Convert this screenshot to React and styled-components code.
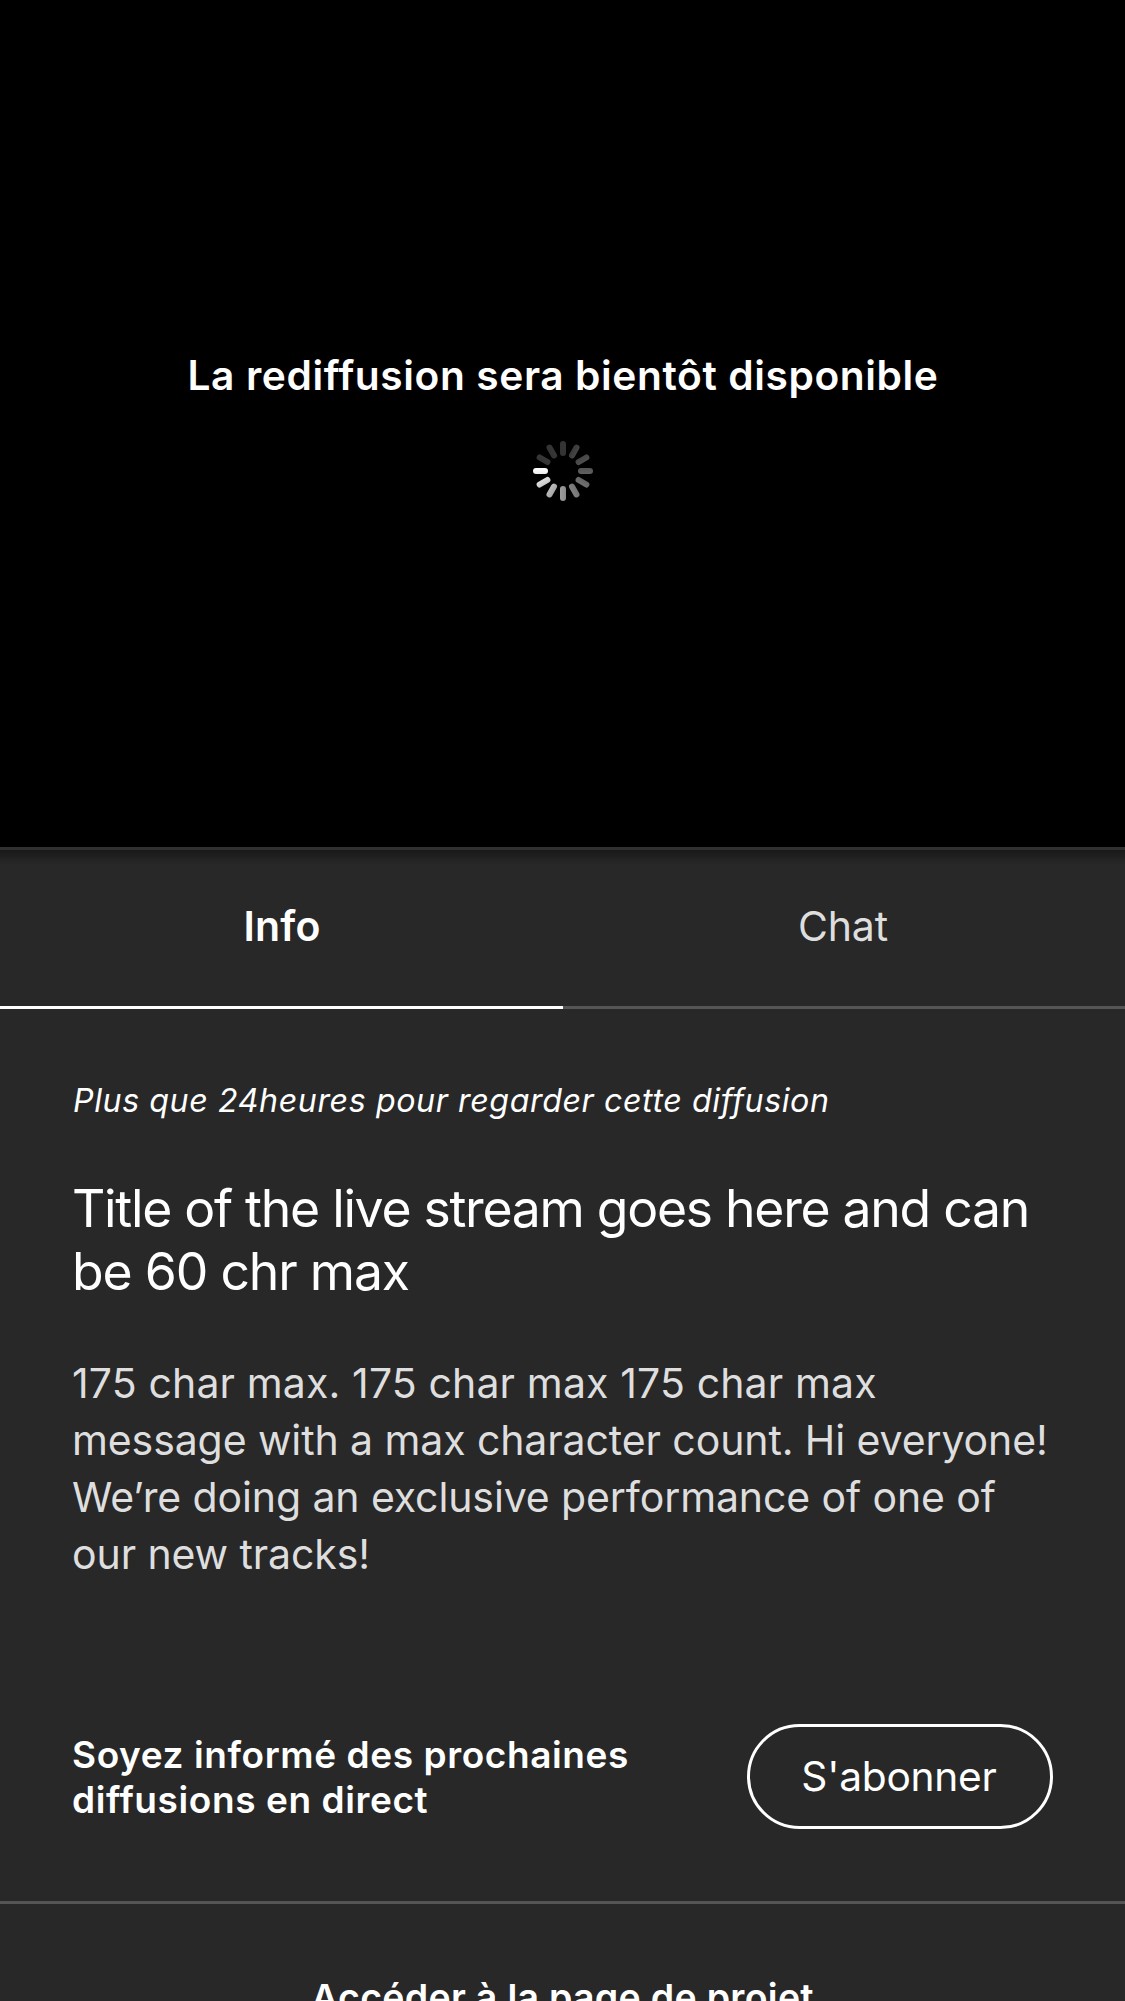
import React from "react";
import styled, { createGlobalStyle } from "styled-components";

const GlobalStyle = createGlobalStyle`
  * { box-sizing: border-box; }
  html, body { margin: 0; background: #282828; overflow: hidden; }
`;

const Screen = styled.main`
  display: flex;
  flex-direction: column;
  width: 1125px;
  height: 2001px;
  overflow: hidden;
  background: #282828;
  color: #fff;
  font-family: Inter, Roboto, sans-serif;
`;

const Player = styled.section`
  display: flex;
  flex-direction: column;
  align-items: center;
  gap: 41px;
  flex: none;
  height: 847px;
  padding: 351px 0 0 1px;
  background: #000;
`;

const PlayerMessage = styled.p`
  margin: 0;
  font-size: 40.7px;
  font-weight: 600;
  line-height: 49px;
  letter-spacing: 0.602px;
  white-space: nowrap;
`;

const SpinnerSvg = styled.svg`
  display: block;
  width: 60px;
  height: 60px;
`;

const Tabs = styled.nav`
  display: flex;
  flex: none;
  height: 162px;
  border-top: 3px solid #303030;
  background: linear-gradient(#191919, #1e1e1e 5px, #252525 11px, #282828 16px);
`;

const Tab = styled.button`
  flex: ${(p) => (p.$active ? "0 0 563px" : "1")};
  padding: ${(p) => (p.$active ? "51px 0 0 1px" : "51px 2px 0 0")};
  border: 0;
  border-bottom: 3px solid ${(p) => (p.$active ? "#fff" : "#555")};
  background: none;
  display: flex;
  justify-content: center;
  align-items: flex-start;
  color: ${(p) => (p.$active ? "#fff" : "#dededf")};
  font: ${(p) => (p.$active ? 600 : 400)} 41px/50px Inter, Roboto, sans-serif;
  letter-spacing: ${(p) => (p.$active ? 0.2 : -0.1)}px;
`;

const Details = styled.section`
  flex: none;
  height: 715px;
  padding: 72px 72px 0;
`;

const Line = styled.span`
  display: block;
  letter-spacing: ${(p) => p.$track}px;
  white-space: nowrap;
`;

const Remaining = styled.p`
  margin: 0 0 57px;
  padding-left: 1px;
  font-size: 32.2px;
  font-style: italic;
  line-height: 39px;
`;

const Title = styled.h1`
  margin: 0 0 52px;
  font-size: 51.7px;
  font-weight: 400;
  line-height: 63px;
`;

const Description = styled.p`
  margin: 0;
  color: #dededf;
  font-size: 41px;
  line-height: 57px;
`;

const SubscribeRow = styled.section`
  display: flex;
  align-items: center;
  justify-content: space-between;
  flex: none;
  height: 105px;
  margin-bottom: 72px;
  padding: 0 72px;
`;

const Prompt = styled.p`
  margin: 0;
  padding-top: 1px;
  font-size: 37px;
  font-weight: 600;
  line-height: 45px;
`;

const SubscribeButton = styled.button`
  width: 306px;
  height: 105px;
  padding: 0 2px 0 0;
  border: 3px solid #fff;
  border-radius: 53px;
  background: none;
  color: #fff;
  font: 400 40.7px/49px Inter, Roboto, sans-serif;
  letter-spacing: -0.25px;
`;

const ProjectLink = styled.footer`
  flex: none;
  height: 147px;
  padding-top: 71px;
  border-top: 3px solid #555;
  text-align: center;
  font-size: 37.5px;
  font-weight: 600;
  line-height: 45px;
  letter-spacing: 0.28px;
`;

const blades = [
  ["#333", "#343434"],
  ["#393939", "#454545"],
  ["#454545", "#505050"],
  ["#545454", "#606060"],
  ["#646464", "#707070"],
  ["#747474", "#828282"],
  ["#8b8b8b", "#9e9e9e"],
  ["#a6a6a6", "#bcbcbc"],
  ["#c8c8c8", "#dedede"],
  ["#ededed", "#ffffff"],
  ["#333", "#383838"],
  ["#333", "#363636"],
];

function Spinner() {
  return (
    <SpinnerSvg viewBox="-30 -30 60 60" role="img" aria-label="Chargement">
      <defs>
        {blades.map(([from, to], i) => (
          <linearGradient id={`blade${i}`} key={i}>
            <stop offset="0" stopColor={from} />
            <stop offset="1" stopColor={to} />
          </linearGradient>
        ))}
      </defs>
      {blades.map((_, i) => (
        <rect
          key={i}
          x="-3"
          y="-30"
          width="6"
          height="15"
          rx="3"
          fill={`url(#blade${i})`}
          transform={`rotate(${i * 30})`}
        />
      ))}
    </SpinnerSvg>
  );
}

export default function App() {
  return (
    <>
      <GlobalStyle />
      <Screen>
        <Player>
          <PlayerMessage>La rediffusion sera bientôt disponible</PlayerMessage>
          <Spinner />
        </Player>
        <Tabs>
          <Tab $active>Info</Tab>
          <Tab>Chat</Tab>
        </Tabs>
        <Details>
          <Remaining>
            <Line $track={0.578}>Plus que 24heures pour regarder cette diffusion</Line>
          </Remaining>
          <Title>
            <Line $track={-1.28}>Title of the live stream goes here and can</Line>
            <Line $track={-1.18}>be 60 chr max</Line>
          </Title>
          <Description>
            <Line $track={0.13}>175 char max. 175 char max 175 char max</Line>
            <Line $track={-0.1}>message with a max character count. Hi everyone!</Line>
            <Line $track={-0.11}>We’re doing an exclusive performance of one of</Line>
            <Line $track={-0.1}>our new tracks!</Line>
          </Description>
        </Details>
        <SubscribeRow>
          <Prompt>
            <Line $track={0.588}>Soyez informé des prochaines</Line>
            <Line $track={0.588}>diffusions en direct</Line>
          </Prompt>
          <SubscribeButton>S'abonner</SubscribeButton>
        </SubscribeRow>
        <ProjectLink>Accéder à la page de projet</ProjectLink>
      </Screen>
    </>
  );
}
